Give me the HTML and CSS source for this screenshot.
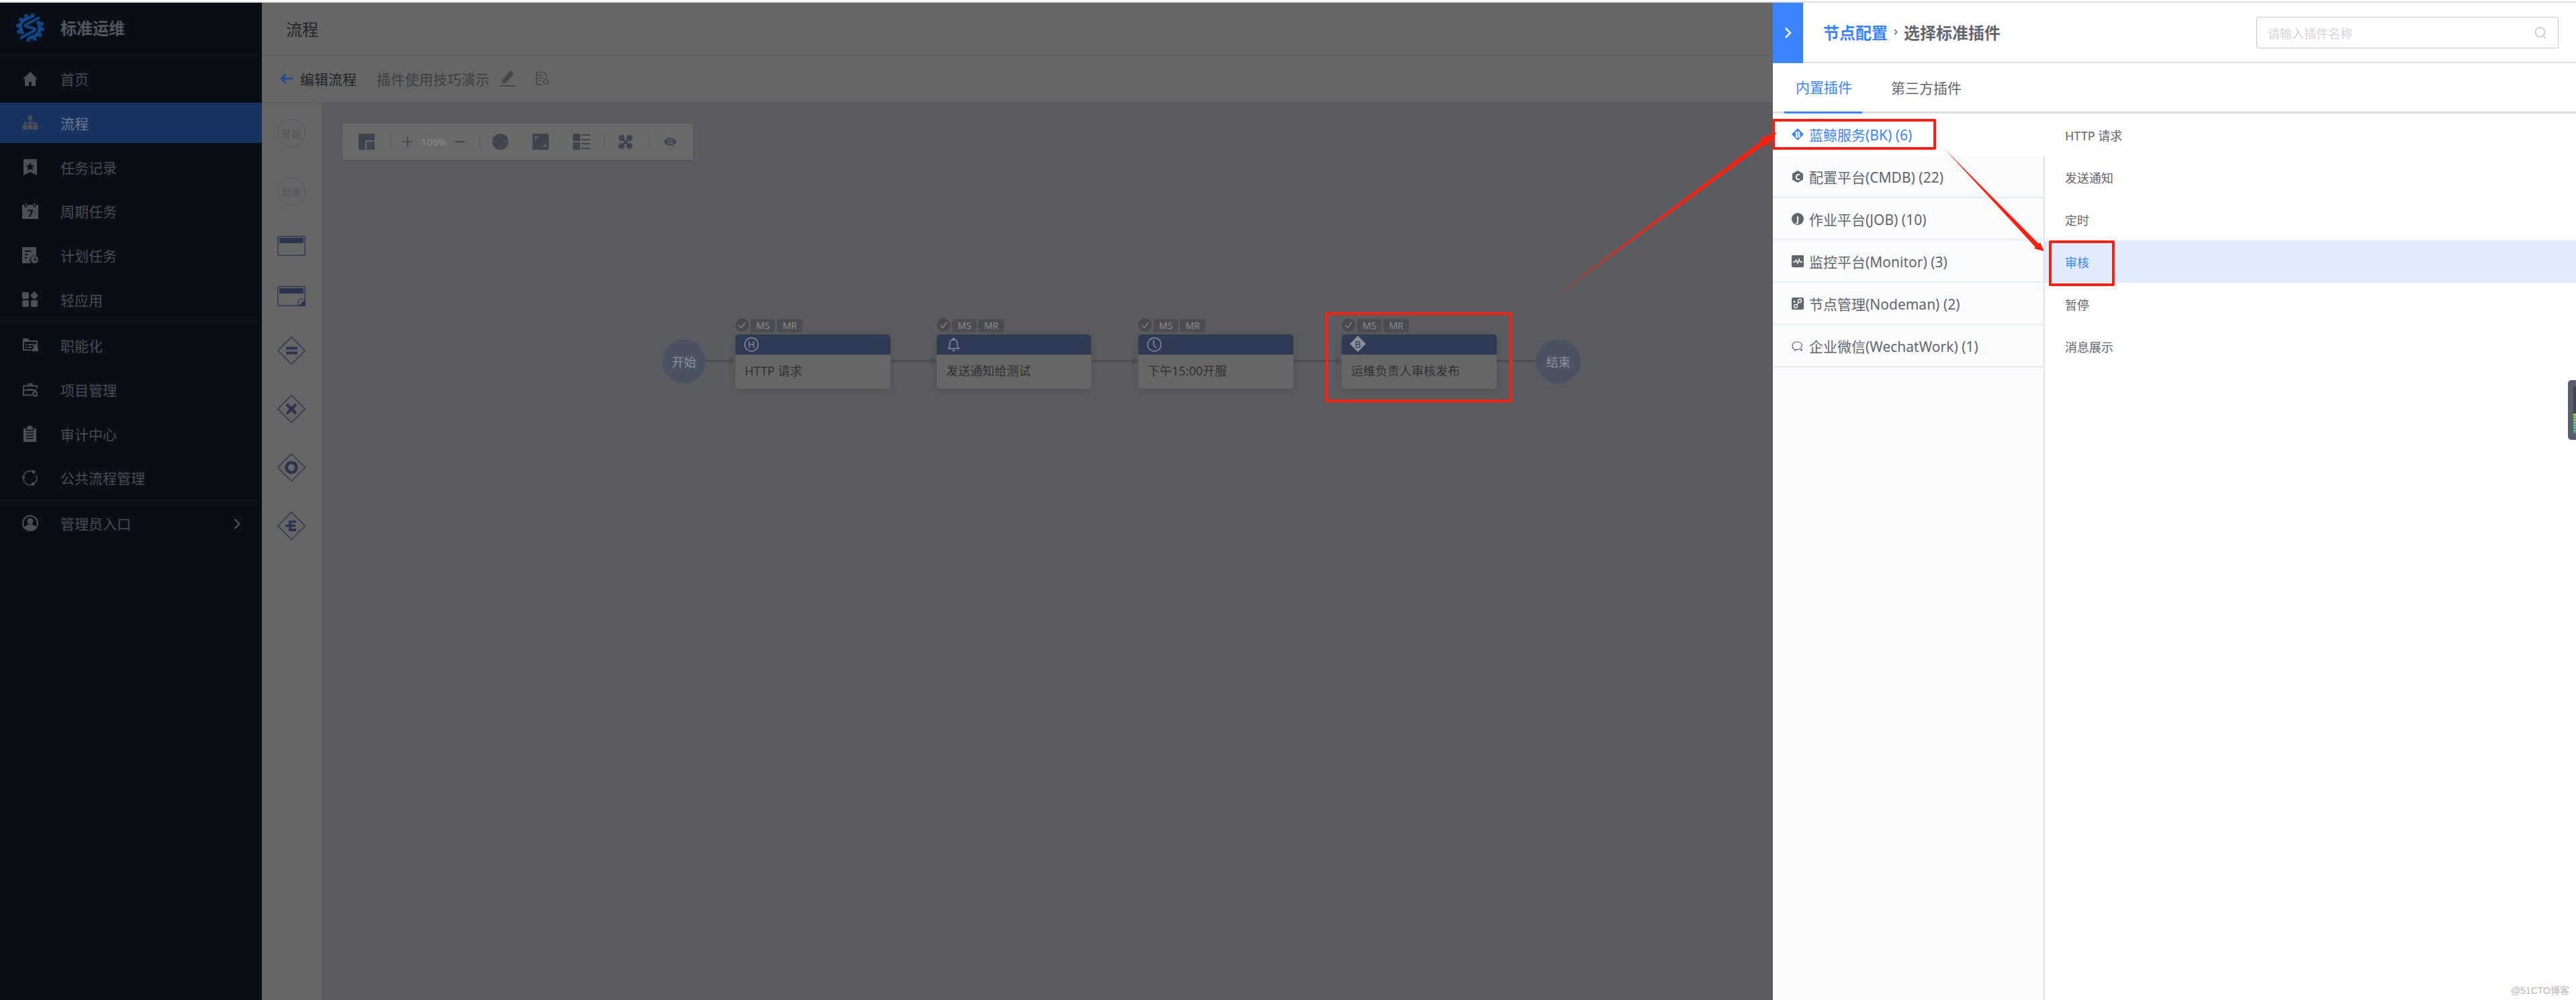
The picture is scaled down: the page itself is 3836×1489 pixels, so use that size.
FILE: index.html
```html
<!DOCTYPE html>
<html lang="zh-CN">
<head>
<meta charset="utf-8">
<title>标准运维</title>
<link rel="stylesheet" href="styles.css">
</head>
<body>
<div class="strip"></div>
<div class="app">
  <aside class="sidebar">
    <div class="brand">
      <svg class="logo" viewBox="0 0 42 42"><circle cx="21" cy="21" r="19" fill="none" stroke="#124585" stroke-width="4" stroke-dasharray="5 5"/><circle cx="21" cy="21" r="14.5" fill="none" stroke="#124585" stroke-width="6"/><path d="M36 5 14 16.500q-3 2 1 3.500l12 2.500q3 1.500-.5 3.500L5 38" fill="none" stroke="#0a0e17" stroke-width="8"/><path d="M35 6 15 16.500q-3 2 1 3.500l11 2.500q3 1.500-.5 3.500L6 37" fill="none" stroke="#124585" stroke-width="4"/></svg>
      <span class="brand-name">标准运维</span>
    </div>
    <div class="nav-group first">
      <div class="nav-item"><svg class="nav-icon" viewBox="0 0 24 24"><path d="M12 2 1 12.500h3V23h6v-6h4v6h6V12.500h3z"/></svg><span>首页</span></div>
      <div class="nav-item active"><svg class="nav-icon" viewBox="0 0 24 24"><path d="M9 1h6v6h-2v4h8v4h2.500v7h-7v-7H19v-2h-6v2h2.500v7h-7v-7H11v-2H5v2h2.500v7h-7v-7H3v-4h8V7H9z"/></svg><span>流程</span></div>
      <div class="nav-item"><svg class="nav-icon" viewBox="0 0 24 24"><path d="M2 0h20v24l-10-5-10 5zm10 5-2 4.500H5.500l3.500 3-1.200 4.500 4.200-2.500 4.200 2.500-1.200-4.500 3.500-3H14z" fill-rule="evenodd"/></svg><span>任务记录</span></div>
      <div class="nav-item"><svg class="nav-icon" viewBox="0 0 24 24"><path d="M5 0h1.500v5H5zm12.500 0H19v5h-1.500zM0 3h3.500v3.500h4V3h9v3.500h4V3H24v21H0z"/><path d="M8 10.500h8v2l-4 8.500H9.500l4-8.500H8z" fill="#0a0e17"/></svg><span>周期任务</span></div>
      <div class="nav-item"><svg class="nav-icon" viewBox="0 0 24 24"><path d="M0 0h21v13a7 7 0 0 0-8 11H0z"/><path d="M4 5h9v2H4zm0 5h5v2H4zm0 5h3v2H4z" fill="#0a0e17"/><circle cx="18.500" cy="18.500" r="5.500"/><path d="M18 15.500h1.500v3H22V20h-4z" fill="#0a0e17"/></svg><span>计划任务</span></div>
      <div class="nav-item"><svg class="nav-icon" viewBox="0 0 24 24"><rect x="0" y="1" width="10" height="10" rx="2"/><path d="m18 0 6 6-6 6-6-6z"/><rect x="0" y="13" width="10" height="10" rx="2"/><rect x="13" y="13" width="10" height="10" rx="2"/></svg><span>轻应用</span></div>
    </div>
    <div class="nav-group">
      <div class="nav-item"><svg class="nav-icon" viewBox="0 0 24 24"><path d="M1 2h8l2 3h12v14h-2V7H3v11h10v2H1z"/><path d="M5 10h2v2H5zm4 0h8v2H9zm-4 4h2v2H5zm4 0h5v2H9z"/><circle cx="19.500" cy="13.500" r="3"/><path d="M14 21c0-7 11-7 11 0z"/></svg><span>职能化</span></div>
      <div class="nav-item"><svg class="nav-icon small" viewBox="0 0 24 24"><path d="M8 5V2h8v3h8v5h-2V7H2v5h20v2H2v6h13v2H0V5zm2 0h4V4h-4z" fill-rule="evenodd"/><path d="M8 11h8v2H8z"/><circle cx="20" cy="19" r="3.500" fill="none" stroke="#4c4f56" stroke-width="2.500"/></svg><span>项目管理</span></div>
      <div class="nav-item"><svg class="nav-icon" viewBox="0 0 24 24"><path d="M7 2h1.500a3 3 0 0 1 6 0H16v4H7zM2 4h3.500v3.500h12V4H21v20H2z"/><path d="M6 10h11v1.500H6zm0 4h11v1.500H6zm0 4h11v1.500H6z" fill="#0a0e17"/></svg><span>审计中心</span></div>
      <div class="nav-item"><svg class="nav-icon" viewBox="0 0 24 24"><path d="M2 12A10 10 0 0 1 16 3M21 9a10 10 0 0 1-3 12M14 23A10 10 0 0 1 2 14" fill="none" stroke="#4c4f56" stroke-width="1.500"/><circle cx="17" cy="3.500" r="2.500"/><circle cx="2" cy="12" r="2"/><circle cx="16" cy="21.500" r="2.500"/></svg><span>公共流程管理</span></div>
    </div>
    <div class="nav-group">
      <div class="nav-item"><svg class="nav-icon" viewBox="0 0 24 24"><circle cx="12" cy="12" r="11" fill="none" stroke="#4c4f56" stroke-width="2"/><circle cx="12" cy="9" r="4.500"/><path d="M3 19c3-7 15-7 18 0a12 12 0 0 1-18 0z"/></svg><span>管理员入口</span><svg class="nav-chevron" viewBox="0 0 10 16"><path d="m1.500 1 7 7-7 7" fill="none" stroke="#4c4f56" stroke-width="2.500"/></svg></div>
    </div>
  </aside>

  <main class="main">
    <header class="page-head">流程</header>
    <div class="sub-head">
      <svg class="back" viewBox="0 0 20 16"><path d="M9 1 2 8l7 7M2 8h18" fill="none" stroke="#24498f" stroke-width="3"/></svg>
      <span class="sub-title">编辑流程</span>
      <span class="flow-name">插件使用技巧演示</span>
      <svg class="pencil" viewBox="0 0 24 24"><path d="m16 0 5 5L9 19H4v-5zM0 22h24v2H0z" fill="#47474b"/></svg>
      <svg class="doc-gear" viewBox="0 0 20 20"><path d="M9 19H3a2 2 0 0 1-2-2V2a2 2 0 0 1 2-2h8l5 5v4M4 5h5M4 9h6M4 13h3" fill="none" stroke="#414145" stroke-width="1.600"/><circle cx="14.500" cy="14.500" r="3.500" fill="none" stroke="#414145" stroke-width="2.200" stroke-dasharray="2 1"/></svg>
    </div>
    <div class="work">
      <div class="palette">
        <div class="pal-circle">开始</div>
        <div class="pal-circle">结束</div>
        <svg class="pal-rect" viewBox="0 0 42 30"><rect x=".75" y=".75" width="40.500" height="28.500" rx="2" fill="none" stroke="#2d3552" stroke-width="1.500"/><rect x="3" y="3" width="36" height="8" fill="#2a3350"/></svg>
        <svg class="pal-rect" viewBox="0 0 42 30"><rect x=".75" y=".75" width="40.500" height="28.500" rx="2" fill="none" stroke="#2d3552" stroke-width="1.500"/><rect x="3" y="3" width="36" height="8" fill="#2a3350"/><path d="M31 29v-7l3-3h7v10z" fill="#666" stroke="#2d3552" stroke-width="1.200"/><path d="M41 20v9H32z" fill="#2a3350"/></svg>
        <svg class="pal-diamond" viewBox="0 0 42 42"><path d="M21 .8 41.200 21 21 41.200.8 21z" fill="none" stroke="#2d3552" stroke-width="1.500"/><path d="M13 15.500h17v4H13zm0 7h17v4H13z" fill="#2a3350"/></svg>
        <svg class="pal-diamond" viewBox="0 0 42 42"><path d="M21 .8 41.200 21 21 41.200.8 21z" fill="none" stroke="#2d3552" stroke-width="1.500"/><path d="m14 14 14 14m0-14L14 28" stroke="#2a3350" stroke-width="4.500"/></svg>
        <svg class="pal-diamond" viewBox="0 0 42 42"><path d="M21 .8 41.200 21 21 41.200.8 21z" fill="none" stroke="#2d3552" stroke-width="1.500"/><circle cx="21" cy="21" r="7.500" fill="none" stroke="#2a3350" stroke-width="4.500"/></svg>
        <svg class="pal-diamond" viewBox="0 0 42 42"><path d="M21 .8 41.200 21 21 41.200.8 21z" fill="none" stroke="#2d3552" stroke-width="1.500"/><path d="M17 13h11v3.500h-7V19h6v3.500h-6V25h7v4H17v-6.500h-5V19h5z" fill="#2a3350"/></svg>
      </div>
      <div class="canvas">
        <div class="toolbar">
          <svg class="tb tb24" viewBox="0 0 24 24"><path d="M0 0h24v10H10v14H0z" fill="#3f4350"/><path d="M12 12h12v12H12z" fill="#3f4350"/></svg>
          <i class="tb-sep s1"></i>
          <svg class="tb tb-plus" viewBox="0 0 16 16"><path d="M8 0v16M0 8h16" stroke="#3f4350" stroke-width="1.600"/></svg>
          <span class="zoom-val">100%</span>
          <svg class="tb tb-minus" viewBox="0 0 15 4"><path d="M0 2h15" stroke="#3f4350" stroke-width="2"/></svg>
          <i class="tb-sep s2"></i>
          <svg class="tb tb24 t-target" viewBox="0 0 24 24"><circle cx="12" cy="12" r="12" fill="#3f4350"/><path d="M12 2v4m0 12v4M2 12h4m12 0h4" stroke="#6a6a6b" stroke-width="1"/></svg>
          <svg class="tb tb24 t-next" viewBox="0 0 24 24"><rect width="24" height="24" rx="1" fill="#3f4350"/><path d="M4.500 10V5H9m10.500 9v5H15" fill="none" stroke="#6a6a6b" stroke-width="1.500"/></svg>
          <svg class="tb tb-list" viewBox="0 0 26 24"><rect width="11" height="11" rx="1" fill="#3f4350"/><rect y="13" width="11" height="11" rx="1" fill="#3f4350"/><path d="M13 1h13v2H13zm0 7h13v2H13zm0 6h13v2H13zm0 7h13v2H13z" fill="#3f4350"/></svg>
          <i class="tb-sep s3"></i>
          <svg class="tb tb-x" viewBox="0 0 21 21"><circle cx="4.500" cy="4.500" r="4.500" fill="#3f4350"/><circle cx="16.500" cy="4.500" r="4.500" fill="#3f4350"/><circle cx="4.500" cy="16.500" r="4.500" fill="#3f4350"/><circle cx="16.500" cy="16.500" r="4.500" fill="#3f4350"/><path d="m4 4 13 13m0-13L4 17" stroke="#3f4350" stroke-width="2.500"/></svg>
          <i class="tb-sep s4"></i>
          <svg class="tb tb-eye" viewBox="0 0 20 12"><path d="M0 6q10-12 20 0Q10 18 0 6z" fill="#3f4350"/><circle cx="10" cy="6" r="3" fill="none" stroke="#6a6a6b" stroke-width="1.500"/></svg>
        </div>

        <svg class="wires" viewBox="0 0 2160 1336">
          <g stroke="#4c4d51" stroke-width="3"><path d="M571 384.500h40M846 384.500h65M1145 384.500h66M1446 384.500h68M1749 384.500h58"/></g>
          <g fill="#4c4d51"><path d="m606 379 9 5.500-9 5.500zM906 379l9 5.500-9 5.500zM1206 379l9 5.500-9 5.500zM1509 379l9 5.500-9 5.500z"/></g>
        </svg>

        <div class="terminal t-start">开始</div>
        <div class="node n1">
          <div class="badges"><svg class="check" viewBox="0 0 20 20"><circle cx="10" cy="10" r="10" fill="#47484c"/><path d="m5 10 4 4 6-8" fill="none" stroke="#85868a" stroke-width="1.300"/></svg><span class="tag">MS</span><span class="tag">MR</span></div>
          <div class="node-head"><svg class="head-icon" viewBox="0 0 22 22"><circle cx="11" cy="11" r="10" fill="none" stroke="#8a8f9e" stroke-width="1.400"/><text x="11" y="16" text-anchor="middle" class="glyph">H</text></svg></div>
          <div class="node-body">HTTP 请求</div>
        </div>
        <div class="node n2">
          <div class="badges"><svg class="check" viewBox="0 0 20 20"><circle cx="10" cy="10" r="10" fill="#47484c"/><path d="m5 10 4 4 6-8" fill="none" stroke="#85868a" stroke-width="1.300"/></svg><span class="tag">MS</span><span class="tag">MR</span></div>
          <div class="node-head"><svg class="head-icon i-bell" viewBox="0 0 18 22"><path d="M1 17h16c-2-2-2.500-4-2.500-8 0-3-2-5-5.500-5S3.500 6 3.500 9c0 4-.5 6-2.500 8zM7.500 4c0-3 3-3 3 0M7 19c1 2 3 2 4 0" fill="none" stroke="#8a8f9e" stroke-width="1.400"/></svg></div>
          <div class="node-body">发送通知给测试</div>
        </div>
        <div class="node n3">
          <div class="badges"><svg class="check" viewBox="0 0 20 20"><circle cx="10" cy="10" r="10" fill="#47484c"/><path d="m5 10 4 4 6-8" fill="none" stroke="#85868a" stroke-width="1.300"/></svg><span class="tag">MS</span><span class="tag">MR</span></div>
          <div class="node-head"><svg class="head-icon" viewBox="0 0 22 22"><circle cx="11" cy="11" r="10" fill="none" stroke="#8a8f9e" stroke-width="1.400"/><path d="M10 4v8l4 4" fill="none" stroke="#8a8f9e" stroke-width="1.400"/></svg></div>
          <div class="node-body">下午15:00开服</div>
        </div>
        <div class="node n4">
          <div class="badges"><svg class="check" viewBox="0 0 20 20"><circle cx="10" cy="10" r="10" fill="#47484c"/><path d="m5 10 4 4 6-8" fill="none" stroke="#85868a" stroke-width="1.300"/></svg><span class="tag">MS</span><span class="tag">MR</span></div>
          <div class="node-head"><svg class="head-icon i-b" viewBox="0 0 24 24"><path d="M12 0 24 12 12 24 0 12z" fill="#8a8f9e"/><text x="12" y="17.500" text-anchor="middle" class="glyph dark">B</text></svg></div>
          <div class="node-body">运维负责人审核发布</div>
        </div>
        <div class="terminal t-end">结束</div>
      </div>
    </div>
  </main>

  <section class="panel">
    <div class="panel-head">
      <div class="collapse"><svg viewBox="0 0 12 18"><path d="m2 2 7 7-7 7" fill="none" stroke="#fff" stroke-width="2.500"/></svg></div>
      <div class="crumb"><span class="crumb-link">节点配置</span><span class="crumb-sep">›</span><span class="crumb-cur">选择标准插件</span></div>
      <div class="search"><span class="placeholder">请输入插件名称</span><svg class="search-icon" viewBox="0 0 18 18"><circle cx="8.500" cy="8" r="7" fill="none" stroke="#c4c6cc" stroke-width="1.600"/><path d="m13 13 4 4" stroke="#c4c6cc" stroke-width="1.600"/></svg></div>
    </div>
    <div class="tabs"><div class="tab on">内置插件</div><div class="tab">第三方插件</div></div>
    <div class="browser">
      <div class="groups">
        <div class="group on"><svg class="group-icon" viewBox="0 0 18 18"><path d="M9 0l9 9-9 9-9-9z" fill="#3a84ff"/><text x="9" y="13.500" text-anchor="middle" class="glyph white">B</text></svg>蓝鲸服务(BK) (6)</div>
        <div class="group"><svg class="group-icon" viewBox="0 0 18 18"><path d="M9 0l8 4.500v9L9 18l-8-4.500v-9z" fill="#63656e"/><text x="9" y="13.500" text-anchor="middle" class="glyph white">C</text></svg>配置平台(CMDB) (22)</div>
        <div class="group"><svg class="group-icon" viewBox="0 0 18 18"><circle cx="9" cy="9" r="9" fill="#63656e"/><text x="9" y="14" text-anchor="middle" class="glyph white">J</text></svg>作业平台(JOB) (10)</div>
        <div class="group"><svg class="group-icon" viewBox="0 0 18 18"><rect width="18" height="18" rx="2" fill="#63656e"/><path d="M2 10h3l1.500-3L9 12l2-6 1.500 4H16" fill="none" stroke="#fff" stroke-width="1.300"/></svg>监控平台(Monitor) (3)</div>
        <div class="group"><svg class="group-icon" viewBox="0 0 18 18"><rect width="18" height="18" rx="2" fill="#63656e"/><path d="m5 14 8-10" stroke="#fff" stroke-width="1.300"/><circle cx="12" cy="5" r="2.500" fill="#63656e" stroke="#fff" stroke-width="1.300"/><circle cx="6" cy="13" r="2.500" fill="#63656e" stroke="#fff" stroke-width="1.300"/><circle cx="4" cy="6" r="1.500" fill="#fff"/></svg>节点管理(Nodeman) (2)</div>
        <div class="group"><svg class="group-icon" viewBox="0 0 18 18"><path d="M5 15C-1 12 0 3 8 3s9 7 5 10c-3 2-5 2-6 1l-2 2z" fill="none" stroke="#63656e" stroke-width="1.200"/><circle cx="14.500" cy="15" r="1.500" fill="#63656e"/></svg>企业微信(WechatWork) (1)</div>
        <div class="groups-rest"></div>
      </div>
      <div class="plugins">
        <div class="plugin">HTTP 请求</div>
        <div class="plugin">发送通知</div>
        <div class="plugin">定时</div>
        <div class="plugin on">审核</div>
        <div class="plugin">暂停</div>
        <div class="plugin">消息展示</div>
      </div>
    </div>
    <div class="meter"><div class="meter-bars"></div></div>
    <div class="watermark">@51CTO博客</div>
  </section>
</div>

<svg class="marks" viewBox="0 0 3836 1489">
  <g fill="none" stroke="#ff2010" stroke-width="4" stroke-linejoin="round">
    <rect x="1976" y="467" width="274" height="130"/>
    <rect x="2641" y="179" width="240" height="42"/>
    <rect x="3053" y="360" width="94" height="64"/>
  </g>
  <path d="M2311 445 2628 215l3 3 15-21-25 9 3 3z" fill="#ff2010"/>
  <path d="M2894 220 3036 363l2-2 6 13-15-4 2-2z" fill="#ff2010"/>
</svg>
</body>
</html>
```
FILE: styles.css
```css
* { box-sizing: border-box; }
html, body { margin: 0; padding: 0; }
body {
  position: relative;
  width: 3836px;
  height: 1489px;
  overflow: hidden;
  background: #fff;
  font-family: "Noto Sans", "Noto Sans CJK SC", sans-serif;
  font-size: 21px;
}
.strip { height: 4px; border-top: 2px solid #fff; background: #dedede; }
.app { display: flex; height: 1485px; }

/* sidebar */
.sidebar { width: 390px; flex: none; background: #0a0e17; color: #4a4d54; }
.brand { height: 78px; display: flex; align-items: center; padding-left: 24px; border-bottom: 1px solid #10141c; }
.logo { width: 42px; height: 42px; margin-top: -4px; }
.brand-name { margin-left: 24px; font-size: 24px; font-weight: 700; color: #54575e; margin-top: -4px; }
.nav-group { display: flex; flex-direction: column; gap: 5.8px; padding: 4px 0 3px; border-bottom: 1px solid #10141c; }
.nav-group.first { padding-top: 5px; }
.nav-group:last-child { border-bottom: 0; }
.nav-item { height: 60px; display: flex; align-items: center; padding-left: 33px; position: relative; }
.nav-item.active { background: #17335f; color: #6f7a8f; }
.nav-icon { width: 24px; height: 24px; margin-right: 33px; fill: #4c4f56; flex: none; }
.nav-icon.small { width: 22px; height: 22px; margin: 0 34px 0 1px; }
.nav-chevron { width: 10px; height: 16px; position: absolute; left: 348px; top: 23px; }

/* main */
.main { width: 2250px; flex: none; display: flex; flex-direction: column; background: #666; }
.page-head { height: 78px; padding-left: 36px; display: flex; align-items: center; font-size: 24px; color: #232327; border-bottom: 1px solid #595959; }
.sub-head { height: 71px; display: flex; align-items: center; padding-left: 27px; border-bottom: 1px solid #5c5c5c; color: #232327; }
.back { width: 19px; height: 16px; }
.sub-title { margin-left: 11px; }
.flow-name { margin-left: 30px; color: #3d3d40; }
.pencil { width: 24px; height: 24px; margin-left: 15px; }
.doc-gear { width: 20px; height: 20px; margin-left: 30px; }
.work { flex: 1; display: flex; min-height: 0; }

.palette { width: 90px; flex: none; display: flex; flex-direction: column; align-items: center; gap: 45px; padding-top: 24px; padding-right: 1px; border-right: 1px solid #58585c; }
.pal-circle { width: 42px; height: 42px; border: 1px solid #55566a; border-radius: 50%; display: flex; align-items: center; justify-content: center; font-size: 15px; color: #535459; flex: none; }
.pal-rect { width: 42px; height: 30px; flex: none; }
.pal-diamond { width: 42px; height: 42px; flex: none; }

.canvas { flex: 1; position: relative; background: #5b5c5f; }
.toolbar { position: absolute; left: 30px; top: 31px; width: 522px; height: 54px; display: flex; align-items: center; padding-left: 24px; background: #6a6a6b; border-radius: 3px; box-shadow: 0 1px 3px rgba(0,0,0,.12); }
.tb { flex: none; }
.tb24 { width: 24px; height: 24px; }
.tb-sep { width: 1px; height: 22px; background: #5b5b5d; flex: none; }
.s1 { margin-left: 23px; }
.tb-plus { width: 16px; height: 16px; margin-left: 17px; }
.zoom-val { width: 37px; margin-left: 12px; font-size: 15px; color: #8a8a8c; white-space: nowrap; flex: none; }
.tb-minus { width: 15px; height: 4px; margin-left: 13px; }
.s2 { margin-left: 22px; }
.t-target { margin-left: 18px; }
.t-next { margin-left: 36px; }
.tb-list { width: 26px; height: 24px; margin-left: 36px; }
.s3 { margin-left: 21px; }
.tb-x { width: 21px; height: 21px; margin-left: 20px; }
.s4 { margin-left: 24px; }
.tb-eye { width: 20px; height: 12px; margin-left: 21px; }

.wires { position: absolute; left: 0; top: 0; width: 2160px; height: 1336px; }
.terminal { position: absolute; top: 352px; height: 66px; border-radius: 50%; background: #4b5263; display: flex; align-items: center; justify-content: center; font-size: 18px; color: #8f9299; }
.t-start { left: 506px; width: 65px; }
.t-end { left: 1807px; width: 67px; }
.node { position: absolute; top: 345px; height: 81px; border-radius: 5px; background: #676767; box-shadow: 0 2px 14px rgba(0,0,0,.14); }
.n1 { left: 615px; width: 231px; }
.n2 { left: 915px; width: 230px; }
.n3 { left: 1215px; width: 231px; }
.n4 { left: 1518px; width: 231px; }
.badges { position: absolute; left: 0; top: -24px; display: flex; align-items: flex-start; gap: 3px; }
.check { width: 20px; height: 20px; }
.tag { height: 20px; margin-top: 1px; padding: 0 8px; border-radius: 2px; background: #4b4c50; color: #8b8c8f; font-size: 14px; line-height: 20px; }
.node-head { height: 30px; padding: 4px 0 0 13px; background: #2f3a55; border-radius: 5px 5px 0 0; }
.head-icon { display: block; width: 22px; height: 22px; }
.head-icon.i-bell { width: 18px; margin-left: 3px; }
.head-icon.i-b { width: 24px; height: 24px; margin: -2px 0 0 -1px; }
.glyph { font-family: "Noto Sans", sans-serif; font-size: 14px; fill: #8a8f9e; }
.glyph.dark { fill: #2f3a55; }
.glyph.white { fill: #fff; font-size: 12px; font-weight: 700; }
.node-body { padding: 11px 14px 0; font-size: 18px; line-height: 26px; color: #2f2f32; white-space: nowrap; }

/* panel */
.panel { flex: 1; position: relative; background: #fff; display: flex; flex-direction: column; min-width: 0; }
.panel-head { height: 90px; flex: none; display: flex; align-items: center; border-bottom: 2px solid #e1e1e3; position: relative; }
.collapse { width: 45px; height: 90px; flex: none; align-self: flex-start; background: #3a84ff; display: flex; align-items: center; justify-content: center; }
.collapse svg { width: 12px; height: 18px; }
.crumb { margin-left: 30px; font-size: 24px; font-weight: 700; display: flex; align-items: center; margin-top: -1px; }
.crumb-link { color: #3a84ff; }
.crumb-sep { width: 24px; text-align: center; font-weight: 400; font-size: 20px; color: #63656e; margin-top: -4px; }
.crumb-cur { color: #63656e; }
.search { position: absolute; left: 720px; top: 21px; width: 450px; height: 47px; border: 1px solid #c4c6cc; border-radius: 3px; display: flex; align-items: center; justify-content: space-between; padding: 0 17px 0 16px; }
.placeholder { font-size: 18px; color: #d3d4d9; }
.search-icon { width: 18px; height: 18px; }
.tabs { height: 75px; flex: none; display: flex; border-bottom: 3px solid #dcdee5; padding-left: 17px; }
.tab { height: 75px; padding: 0 15px 3px 17px; display: flex; align-items: center; color: #63656e; }
.tab + .tab { margin-left: 26px; }
.tab.on { color: #3a84ff; border-bottom: 3px solid #3a84ff; }
.browser { flex: 1; display: flex; min-height: 0; }
.groups { width: 405px; flex: none; display: flex; flex-direction: column; background: #fafbfd; }
.group { height: 63px; flex: none; display: flex; align-items: center; padding-left: 28px; color: #63656e; border-bottom: 2px solid #e9ebf2; border-right: 2px solid #e1e3ec; white-space: nowrap; }
.group.on { background: #fff; color: #3a84ff; border-right-color: #fff; border-bottom-color: #fff; }
.group-icon { width: 18px; height: 18px; margin-right: 8px; flex: none; }
.groups-rest { flex: 1; border-right: 2px solid #e1e3ec; }
.plugins { flex: 1; }
.plugin { height: 63px; padding-left: 30px; display: flex; align-items: center; font-size: 18px; color: #63656e; }
.plugin.on { background: #e1ecff; color: #3a84ff; }
.meter { position: absolute; right: 0; top: 562px; width: 12px; height: 89px; background: #5a5d6b; border-radius: 5px 0 0 5px; padding: 10px 0 0 8px; }
.meter-bars { width: 4px; height: 69px; background: repeating-linear-gradient(to bottom, transparent 0 3px, #5a5d6b 3px 4px), linear-gradient(to bottom, #3c3f4c 0 56%, #b5cf4f 57%, #38c9a5 100%); }
.watermark { position: absolute; right: 10px; bottom: 5px; font-family: "Liberation Sans", "Noto Sans CJK SC", sans-serif; font-size: 14px; line-height: 18px; color: #b5b5b5; }

.marks { position: absolute; left: 0; top: 0; width: 3836px; height: 1489px; pointer-events: none; }
```
